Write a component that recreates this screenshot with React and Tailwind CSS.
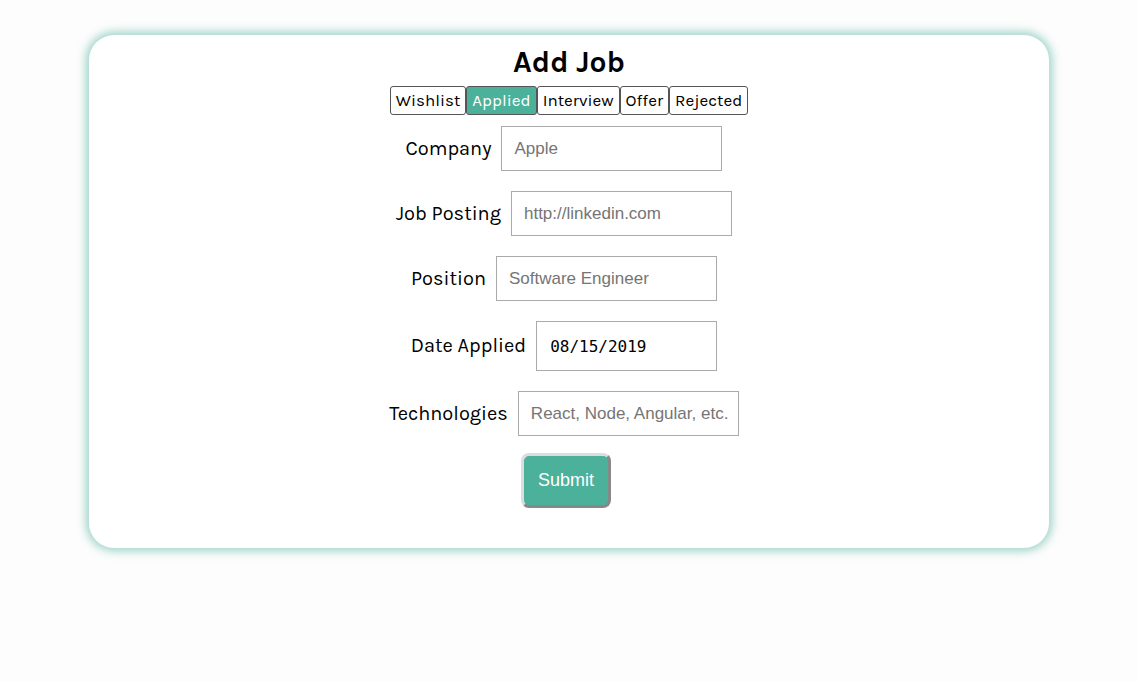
import React, { useState } from "react";

const statuses = ["Wishlist", "Applied", "Interview", "Offer", "Rejected"];

const fields = [
  { label: "Company", placeholder: "Apple" },
  { label: "Job Posting", placeholder: "http://linkedin.com" },
  { label: "Position", placeholder: "Software Engineer" },
];

export default function App() {
  const [status, setStatus] = useState("Applied");

  return (
    <div className="min-h-[682px] bg-[#fdfdfd] pt-[35px] font-['Karla','Lato',sans-serif] text-black">
      <div className="mx-auto w-[960px] rounded-[25px] bg-white pt-[9px] pb-[40px] shadow-[0_0_10px_3px_rgba(76,175,154,0.55)]">
        <h1 className="text-center text-[30px] font-bold leading-[36px]">Add Job</h1>

        {/* status tabs */}
        <div className="mt-[6px] flex justify-center">
          {statuses.map(s => (
            <button
              key={s}
              onClick={() => setStatus(s)}
              className={
                s === status
                  ? "h-[29px] rounded-[3px] border border-[#555] bg-[#4bb19b] px-[5px] text-[17px] text-white"
                  : "h-[29px] rounded-[3px] border border-[#555] bg-white px-[5px] text-[17px] text-black"
              }
            >
              {s}
            </button>
          ))}
        </div>

        <div className="mt-[11px] flex flex-col items-center gap-[20px]">
          {fields.map(f => (
            <div key={f.label} className="flex items-center gap-[10px]">
              <label className="text-[20px]">{f.label}</label>
              <input
                placeholder={f.placeholder}
                className="mr-[10px] h-[45px] w-[221px] border border-[#aaa] pl-[12px] pr-[4px] font-['Liberation_Sans',Arial,sans-serif] text-[17px] placeholder:text-[#757575] outline-none"
              />
            </div>
          ))}

          <div className="flex items-center gap-[10px]">
            <label className="text-[20px]">Date Applied</label>
            <input
              defaultValue="08/15/2019"
              className="mr-[10px] h-[50px] w-[181px] border border-[#aaa] px-[13px] font-['DejaVu_Sans_Mono',monospace] text-[16px] outline-none"
            />
          </div>

          <div className="flex items-center gap-[10px]">
            <label className="text-[20px]">Technologies</label>
            <input
              placeholder="React, Node, Angular, etc."
              className="mr-[10px] h-[45px] w-[221px] border border-[#aaa] pl-[12px] pr-[4px] font-['Liberation_Sans',Arial,sans-serif] text-[17px] placeholder:text-[#757575] outline-none"
            />
          </div>
        </div>

        <div className="mt-[17px] flex justify-center">
          <button className="mr-[6px] h-[55px] w-[90px] rounded-[8px] border-[3px] border-t-[#ddd] border-l-[#ddd] border-r-[#888] border-b-[#888] bg-[#4bb19b] font-['Liberation_Sans',Arial,sans-serif] text-[18px] text-white">
            Submit
          </button>
        </div>
      </div>
    </div>
  );
}
